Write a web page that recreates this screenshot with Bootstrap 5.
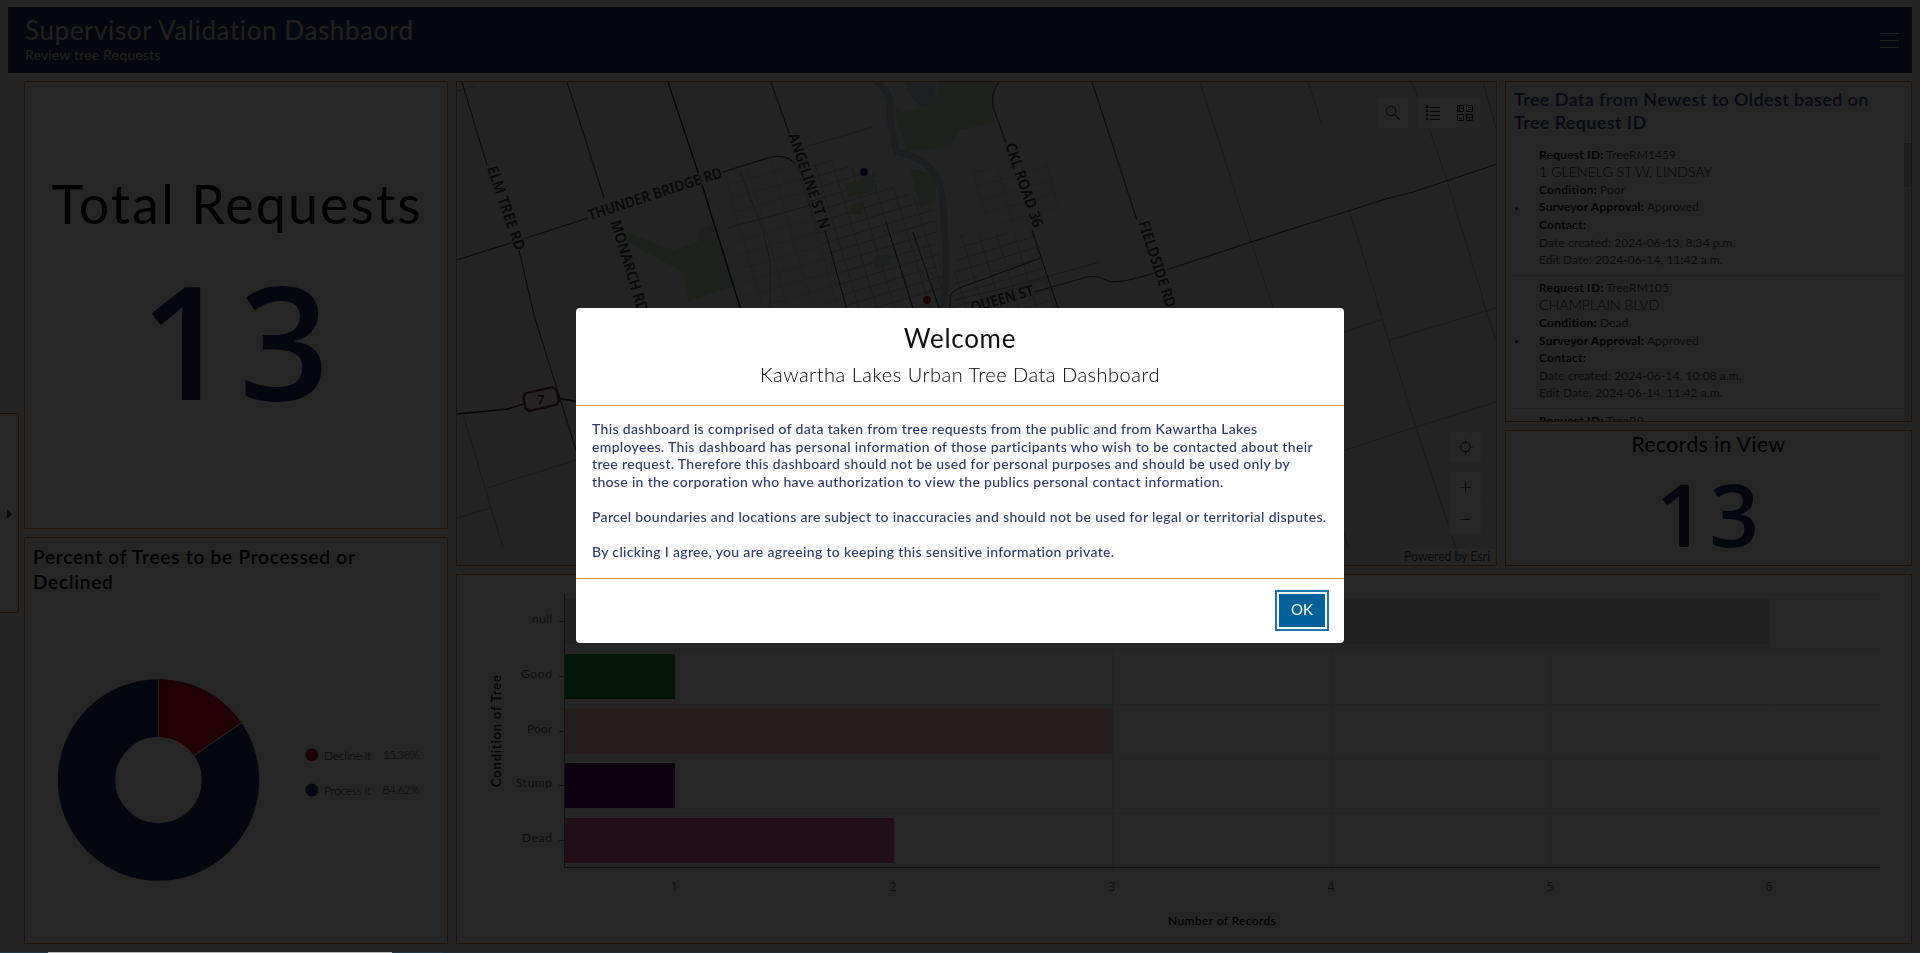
<!DOCTYPE html>
<html lang="en">
<head>
<meta charset="utf-8">
<title>Supervisor Validation Dashboard</title>
<meta name="viewport" content="width=device-width, initial-scale=1">
<link href="https://cdn.jsdelivr.net/npm/bootstrap@5.3.0/dist/css/bootstrap.min.css" rel="stylesheet">
<style>
  :root { --navy:#20296b; --rule:#cf8533; --face:Lato,"Open Sans",sans-serif; --digits:"Open Sans","Noto Sans",sans-serif; }
  html, body { height:100%; overflow:hidden; }
  body { font-family:var(--face); font-variant-ligatures:none; color:#000; background:#fdf9f7; }
  .page { height:953px; padding:7px 8px 0; }
  .topbar { height:66px; background:var(--navy); border:1px solid #5a3c1c; color:#d8d8d8; padding:7px 12px 0 16px; }
  .topbar h1 { font-size:26px; line-height:31px; font-weight:400; letter-spacing:.6px; }
  .topbar p { font-size:14px; line-height:17px; letter-spacing:.18px; }
  .menu-icon { margin-top:15px; }
  .board { display:grid; grid-template-columns:424px 1456px; column-gap:8px; margin:8px 0 0 16px; height:863px; }
  .pane { background:#fff; border:1px solid var(--rule); overflow:hidden; }
  .h-total { height:448px; } .h-pie { height:407px; }
  .h-list { height:341px; } .h-view { height:136px; }
  .right { display:grid; grid-template-columns:1041px 407px; grid-template-rows:485px 370px; gap:8px; }
  .wide { grid-column:1 / 3; }
  .big-title { font-size:54px; line-height:66px; margin-top:89px; padding-left:2px; letter-spacing:1.95px; }
  .big-num { font:600 158px/170px var(--digits); color:var(--navy); margin-top:17px; padding-left:6px; letter-spacing:9px; }
  .pane-title { font-size:19px; line-height:25px; font-weight:600; padding:6px 8px 0; letter-spacing:.78px; }
  .list-title { font-size:18px; line-height:23.3px; font-weight:600; color:#3a4580; padding:6px 8px 0; letter-spacing:.38px; }
  .feed { height:279px; margin-top:8px; }
  .feed .entry { font-size:12px; line-height:17.6px; color:#555; padding:3px 0 0 27px; border-bottom:1px solid #ddd; margin-left:6px; height:133.3px; letter-spacing:.08px; }
  .feed .street { font-size:14.5px; font-weight:300; color:#222; letter-spacing:-.2px; }
  .feed strong { color:#111; letter-spacing:.22px; }
  .bullet { width:3px; height:3px; background:#222; left:3px; top:64px; }
  .track { width:7px; background:#e6e6e6; } .thumb { height:44px; background:#c4c4c4; }
  .view-title { font-size:21px; line-height:26px; margin-top:0; letter-spacing:.47px; }
  .view-num { font:600 87px/92px var(--digits); color:var(--navy); margin-top:10px; padding-left:2px; letter-spacing:4px; }
  svg { display:block; }
  .handle { left:0; top:413px; width:19px; height:200px; background:#fff; border:1px solid var(--rule); border-left:0; border-radius:0 3px 3px 0; }
  .handle::after { content:""; position:absolute; left:7px; top:95px; border:5px solid transparent; border-left-color:#444; border-right:0; }
  .shade { position:absolute; inset:0; background:rgba(0,0,0,.85); }
  .strip { bottom:0; left:0; right:0; height:1px; background:linear-gradient(90deg,#22394a 0 48px,#b4b6b6 48px 392px,#22394a 392px 443px,#1d2833 443px); }
  .modal .modal-dialog { max-width:768px; margin:308px 0 0 576px; }
  .modal .modal-content { height:335px; border:0; border-radius:4px; color:#151515; }
  .m-head { height:98px; border-bottom:1px solid #d9953f; padding-top:13px; }
  .m-head h2 { font-size:26px; line-height:34px; margin:0; font-weight:400; color:#111; letter-spacing:.7px; }
  .m-head p { font-size:20px; line-height:26px; margin:6px 0 0; font-weight:300; color:#000; letter-spacing:.5px; }
  .m-body { height:173px; border-bottom:1px solid #d98a3f; padding:14px 16px; color:#2c3874; font-size:14px; font-weight:500; line-height:17.6px; letter-spacing:.33px; }
  .m-body div { height:17.6px; white-space:nowrap; }
  .btn-ok { width:46px; height:33px; padding:0 0 3px; border-radius:0; border:0; background:#00619b; color:#fff; font-size:15px; outline:2px solid #1b75a8; outline-offset:2px; margin:15px 19px 0 0; }
</style>
</head>
<body>
<div class="page position-relative">
  <header class="topbar d-flex justify-content-between">
    <div><h1 class="m-0">Supervisor Validation Dashbaord</h1><p class="m-0">Review tree Requests</p></div>
    <svg class="menu-icon flex-shrink-0" width="19" height="22" viewBox="0 0 19 22" stroke="#e4e4e4"><path d="M0 3.5h19M0 10.500h19M0 17.500h19"/></svg>
  </header>

  <main class="board">
    <div class="d-flex flex-column gap-2">
      <section class="pane h-total text-center text-nowrap">
        <div class="big-title">Total Requests</div>
        <div class="big-num">13</div>
      </section>
      <section class="pane h-pie">
        <div class="pane-title">Percent of Trees to be Processed or<br>Declined</div>
        <svg width="422" height="349" viewBox="25 594 422 349" font-size="12" font-weight="300" fill="#222">
          <circle cx="158.500" cy="780" r="72" fill="none" stroke="#20296b" stroke-width="57.500"/>
          <path d="M158.500 679.300A100.700 100.700 0 0 1 241.400 722.800L193.900 755.600A43 43 0 0 0 158.500 737Z" fill="#d9041e"/>
          <path d="M158.500 679v58M193.900 755.600L241.600 722.700" stroke="#fff"/>
          <circle cx="311.800" cy="754.800" r="6.500" fill="#b8102a"/><circle cx="311.800" cy="790" r="6.500" fill="#20296b"/>
          <text x="324" y="759.500" textLength="47">Decline it</text><text x="383" y="758.500" textLength="36">15.38%</text>
          <text x="324" y="794.500" textLength="47">Process it</text><text x="382.500" y="793.500" textLength="37">84.62%</text>
        </svg>
      </section>
    </div>

    <div class="right">
      <section class="pane h-map">
        <svg width="1039" height="483" viewBox="457 82 1039 483" fill="none">
          <defs>
            <pattern id="blocks" width="17" height="11" patternUnits="userSpaceOnUse" patternTransform="rotate(-17)"><path d="M0 .5H17M.5 0V11" stroke="#b4b4b4" stroke-width=".8"/></pattern>
            <pattern id="lots" width="24" height="14" patternUnits="userSpaceOnUse" patternTransform="rotate(-16)"><path d="M0 .5H24M.5 0V14" stroke="#d0d0d0" stroke-width=".8"/></pattern>
          </defs>
          <rect x="457" y="82" width="1040" height="483" fill="#efefef"/>
          <path d="M725 172L795 160L846 308H745Z M970 170L1050 160L1060 205L1030 230L985 220Z" fill="url(#lots)"/>
          <path d="M795 165L835 160L932 205L948 308H847L812 215Z M960 235L1035 232L1060 308H950Z" fill="url(#blocks)"/>
          <g fill="#ccdcb8">
            <path d="M619 230L673 250L698 242L699 230L714 225L733 286L688 302L683 272L629 243Z"/>
            <path d="M893 104L903 112L921 110L937 92L938 82H997L992 108L995 122L960 130L950 148L906 150Z"/>
            <path d="M910 168L937 175L935 202L920 208Z M845 185L876 173L872 192L849 198ZM852 204L864 202L862 214L850 214ZM874 256L890 254L888 266L874 268Z"/>
          </g>
          <path d="M903 82H937L933 102L921 108L910 95Z" fill="#c9d2dc"/>
          <path d="M876 82Q892 90 890 112Q892 138 897 152Q928 158 938 180Q945 200 944 230Q949 262 943 310" stroke="#b8c8d8" stroke-width="7"/>
          <g stroke="#aaa">
            <path d="M801 148L873 127M1200 82L1251 242L1273 308M1308 82L1322 125M1411 82L1416 92L1447 180L1487 312M1349 211L1382 315M1483 82L1496 128"/>
            <path d="M1376 300L1416 427L1456 548M1344 332L1383 319M1390 340L1496 308M1345 450L1416 427L1496 402M1482 300L1496 340M1343 530L1348 548"/>
            <path d="M463 414L503 548M487 488L576 460M457 518L490 508M457 91L475 86M740 172L763 230L770 262V308M727 228L812 205M955 300L1005 288L1100 262"/>
          </g>
          <g stroke="#555" stroke-width="1.200">
            <path d="M462 82L487 165M519 250L534 315L576 450M567 82L604 198M771 82L789 133M825 230L847 310M457 260L520 240L588 218M723 172L771 157Q788 154 795 164M886 222L913 308M913 232L939 308M950 308V296Q952 290 970 284L1041 258"/>
            <path d="M999 82Q991 92 993 107L1006 143M1032 230L1058 308M1092 82L1137 220M1034 292L1087 277Q1097 275 1108 281Q1120 284 1154 273M1166 270L1251 242L1389 198L1413 192L1497 164"/>
          </g>
          <path d="M668 82L698 172L741 310M457 414L508 409L523 404M557 398L580 402" stroke="#222" stroke-width="1.600"/>
          <path transform="rotate(-13 541 399)" d="M527 390h28l3 4v11l-3 3h-28l-3-3v-11z" fill="#f3ecee" stroke="#6b4044" stroke-width="2.500"/>
          <g fill="#383838" font-family="Noto Sans, Open Sans, sans-serif" font-size="15" font-weight="600" text-anchor="middle" stroke="#efefef" stroke-width="2" paint-order="stroke">
            <text transform="translate(506 208) rotate(71)" y="5" textLength="88" lengthAdjust="spacingAndGlyphs">ELM TREE RD</text>
            <text transform="translate(655 194) rotate(-18)" y="5" textLength="140" lengthAdjust="spacingAndGlyphs">THUNDER BRIDGE RD</text>
            <text transform="translate(809 181) rotate(71)" y="5" textLength="100" lengthAdjust="spacingAndGlyphs">ANGELINE ST N</text>
            <text transform="translate(629 266) rotate(73)" y="5" textLength="95" lengthAdjust="spacingAndGlyphs">MONARCH RD</text>
            <text transform="translate(1024 185) rotate(71)" y="5" textLength="88" lengthAdjust="spacingAndGlyphs">CKL ROAD 36</text>
            <text transform="translate(1157 264) rotate(72)" y="5" textLength="90" lengthAdjust="spacingAndGlyphs">FIELDSIDE RD</text>
            <text transform="translate(1002 299) rotate(-16)" y="5" textLength="65" lengthAdjust="spacingAndGlyphs">QUEEN ST</text>
            <text x="541" y="404" font-size="13" stroke="none">7</text>
          </g>
          <circle cx="864" cy="172" r="4" fill="#20296b"/><circle cx="927" cy="300" r="4" fill="#c4123a"/>
          <g fill="#fff" stroke="#e2e2e2" stroke-width=".8"><path d="M1377 97h32v32h-32zM1417 97h64v32h-64zM1449 431h33v32h-33zM1449 471h33v64h-33z"/><path d="M1449 503h33"/></g>
          <rect x="1400" y="549" width="97" height="17" fill="#fafafa"/>
          <g stroke="#555" stroke-width="1.200">
            <circle cx="1391" cy="111" r="4.700"/><path d="M1394.500 114.500l5 5"/>
            <path d="M1430 107.500h10M1430 111.500h10M1430 115.500h10M1430 119.500h10" stroke="#333" stroke-width="1"/>
            <path d="M1427 105.500v15" stroke-width="2.400" stroke-dasharray="2.500 1.600" stroke="#333"/>
            <path d="M1457.500 105.500h6v6h-6zM1466.500 105.500h6v6h-6zM1457.500 114.500h6v6h-6zM1466.500 114.500h6v6h-6zM1459.500 106v5M1461 108.500h2M1468 107.500h3M1468 109.500h3M1459 118.500h3M1467 117.500h5M1469.500 118v2" stroke="#333" stroke-width="1"/>
            <circle cx="1465.500" cy="447" r="4.800"/><path d="M1465.500 439.500v4M1465.500 450.500v4M1458 447h4M1469 447h4M1460.500 487.500h10M1465.500 482.500v10M1460.500 519.500h10"/>
          </g>
          <text x="1404" y="561" font-size="12.500" fill="#555" textLength="86">Powered by Esri</text>
        </svg>
      </section>

      <div class="d-flex flex-column gap-2">
        <section class="pane h-list">
          <div class="list-title text-nowrap">Tree Data from Newest to Oldest based on<br>Tree Request ID</div>
          <div class="feed d-flex">
            <div class="flex-grow-1">
              <div class="entry position-relative"><i class="bullet position-absolute rounded-circle"></i>
                <div><strong>Request ID:</strong> TreeRM1459</div><div class="street">1 GLENELG ST W, LINDSAY</div>
                <div><strong>Condition:</strong> Poor</div><div><strong>Surveyor Approval:</strong> Approved</div><div><strong>Contact:</strong></div>
                <div>Date created: 2024-06-13, 8:34 p.m.</div><div>Edit Date: 2024-06-14, 11:42 a.m.</div></div>
              <div class="entry position-relative"><i class="bullet position-absolute rounded-circle"></i>
                <div><strong>Request ID:</strong> TreeRM105</div><div class="street">CHAMPLAIN BLVD</div>
                <div><strong>Condition:</strong> Dead</div><div><strong>Surveyor Approval:</strong> Approved</div><div><strong>Contact:</strong></div>
                <div>Date created: 2024-06-14, 10:08 a.m.</div><div>Edit Date: 2024-06-14, 11:42 a.m.</div></div>
              <div class="entry"><div><strong>Request ID:</strong> TreeR9</div></div>
            </div>
            <div class="track"><div class="thumb"></div></div>
          </div>
        </section>
        <section class="pane h-view text-center">
          <div class="view-title">Records in View</div>
          <div class="view-num">13</div>
        </section>
      </div>

      <section class="pane wide">
        <svg width="1454" height="368" viewBox="457 575 1454 368" font-size="12" fill="#666">
          <path d="M564 594.500H1880M564 649.500H1880M564 704.500H1880M564 758.500H1880M564 813.500H1880M675 594V872M893.800 594V872M1112.600 594V872M1331.400 594V872M1550.200 594V872M1769 594V872" stroke="#e9e9e9" fill="none"/>
          <path d="M564 599h1205v45H564z" fill="#dcdcdc"/><path d="M564 654h111v45H564z" fill="#1e9440"/><path d="M564 708.500h548.500v45H564z" fill="#f7c4b8"/><path d="M564 763h111v45H564z" fill="#62006c"/><path d="M564 818h330v45H564z" fill="#e05f92"/>
          <path d="M564.500 594V867.500H1880M559 621.500h5M559 676.500h5M559 731.500h5M559 785.500h5M559 840.500h5" stroke="#777" fill="none"/>
          <g text-anchor="end"><text x="552" y="622.500" textLength="20">null</text><text x="552" y="678" textLength="31">Good</text><text x="552" y="732.500" textLength="25">Poor</text><text x="552" y="787" textLength="36">Stump</text><text x="552" y="841.500" textLength="30">Dead</text></g>
          <g text-anchor="middle" font-family="Open Sans"><text x="674.500" y="891">1</text><text x="893" y="891">2</text><text x="1112" y="891">3</text><text x="1331" y="891">4</text><text x="1550" y="891">5</text><text x="1769" y="891">6</text></g>
          <g fill="#111" font-weight="600"><text x="1168" y="925" textLength="108">Number of Records</text><text transform="translate(501 787) rotate(-90)" font-size="13" textLength="112">Condition of Tree</text></g>
        </svg>
      </section>
    </div>
  </main>
  <div class="handle position-absolute"></div>
  <div class="shade"></div>
  <div class="strip position-absolute"></div>
</div>

<div class="modal d-block" tabindex="-1" role="dialog">
  <div class="modal-dialog">
    <div class="modal-content">
      <div class="m-head text-center"><h2>Welcome</h2><p>Kawartha Lakes Urban Tree Data Dashboard</p></div>
      <div class="m-body">
        <div>This dashboard is comprised of data taken from tree requests from the public and from Kawartha Lakes</div>
        <div>employees. This dashboard has personal information of those participants who wish to be contacted about their</div>
        <div>tree request. Therefore this dashboard should not be used for personal purposes and should be used only by</div>
        <div>those in the corporation who have authorization to view the publics personal contact information.</div>
        <div></div>
        <div>Parcel boundaries and locations are subject to inaccuracies and should not be used for legal or territorial disputes.</div>
        <div></div>
        <div>By clicking I agree, you are agreeing to keeping this sensitive information private.</div>
      </div>
      <div class="text-end"><button type="button" class="btn btn-ok">OK</button></div>
    </div>
  </div>
</div>
<script src="https://cdn.jsdelivr.net/npm/bootstrap@5.3.0/dist/js/bootstrap.bundle.min.js"></script>
</body>
</html>
